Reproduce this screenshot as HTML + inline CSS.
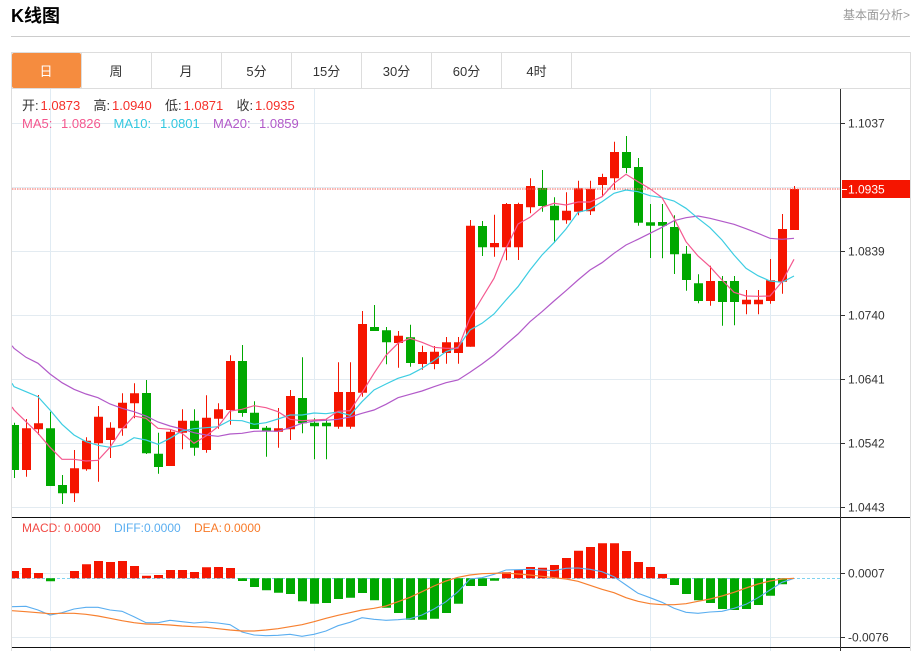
<!DOCTYPE html>
<html>
<head>
<meta charset="utf-8">
<style>
html,body{margin:0;padding:0;background:#fff;width:920px;height:651px;overflow:hidden}
svg{position:absolute;left:0;top:0;display:block}
text{font-family:"Liberation Sans","Noto Sans CJK SC",sans-serif}
</style>
</head>
<body>
<svg width="920" height="651" viewBox="0 0 920 651" xmlns="http://www.w3.org/2000/svg">
<defs><clipPath id="c"><rect x="12" y="88" width="828" height="563"/></clipPath></defs>
<text x="11" y="22" font-size="18" font-weight="700" fill="#000">K线图</text>
<text x="910" y="19" font-size="12" fill="#999" text-anchor="end">基本面分析&gt;</text>
<rect x="11" y="36" width="899" height="1" fill="#ccc"/>

<!-- frame + tabs -->
<rect x="11.5" y="52.5" width="899" height="36" fill="none" stroke="#ddd"/>
<path d="M11.5 88V651M910.5 88V651" stroke="#ddd" fill="none"/>
<path d="M81.5 52V88M151.5 52V88M221.5 52V88M291.5 52V88M361.5 52V88M431.5 52V88M501.5 52V88M571.5 52V88" stroke="#ddd" fill="none"/>
<rect x="12" y="53" width="69" height="35" rx="2" fill="#f58c3f"/>
<g font-size="13" text-anchor="middle" fill="#333">
<text x="46" y="76" fill="#fff">日</text>
<text x="116" y="76">周</text>
<text x="186" y="76">月</text>
<text x="256.5" y="76">5分</text>
<text x="326.5" y="76">15分</text>
<text x="396.5" y="76">30分</text>
<text x="466.5" y="76">60分</text>
<text x="536.5" y="76">4时</text>
</g>

<!-- grid -->
<path d="M12 123.5H840M12 187.5H840M12 251.5H840M12 315.5H840M12 379.5H840M12 443.5H840M12 507.5H840M12 573.5H840M12 637.5H840" stroke="#e3ebf1" fill="none"/>
<path d="M50.5 89V651M314.5 89V651M650.5 89V651M770.5 89V651" stroke="#e0ebf3" fill="none"/>

<!-- legend -->
<g font-size="13">
<text x="22" y="110" fill="#333">开:</text><text x="40.5" y="110" fill="#f5302a">1.0873</text>
<text x="93.5" y="110" fill="#333">高:</text><text x="112" y="110" fill="#f5302a">1.0940</text>
<text x="165" y="110" fill="#333">低:</text><text x="183.5" y="110" fill="#f5302a">1.0871</text>
<text x="236.5" y="110" fill="#333">收:</text><text x="255" y="110" fill="#f5302a">1.0935</text>
<text x="22" y="128" fill="#f4588f">MA5:</text><text x="61" y="128" fill="#f4588f">1.0826</text>
<text x="113.5" y="128" fill="#33c8e0">MA10:</text><text x="160" y="128" fill="#33c8e0">1.0801</text>
<text x="213" y="128" fill="#b25ac9">MA20:</text><text x="259" y="128" fill="#b25ac9">1.0859</text>
</g>

<g clip-path="url(#c)">
<!-- candle wicks -->
<path fill="none" stroke="#f51500" d="M26.5 419V476.7M38.5 395V435M74.5 450V502M86.5 437.3V470.7M98.5 406V481.7M110.5 422.3V458M122.5 393.3V435.7M134.5 383.3V418.3M170.5 429.3V466M182.5 409.3V449.3M206.5 395.3V452.7M218.5 403.3V428.7M230.5 355.3V424.7M278.5 408V447.7M290.5 390V440M338.5 362.3V428.7M350.5 362.3V428.7M362.5 311V396.7M398.5 331V367.7M422.5 345.7V369.7M434.5 346V369.3M446.5 337V363.7M458.5 337V363.7M470.5 220V346.7M494.5 214.7V256.7M506.5 203V260.3M518.5 202.7V260M530.5 178.3V213.3M566.5 192.3V223.7M578.5 180.7V215.3M590.5 180.7V215M602.5 173.7V196.7M614.5 141.7V190M710.5 265.7V305.7M746.5 290V314.3M758.5 290V314.3M770.5 259V303.7M782.5 214V293.7M794.5 186V230"/>
<path fill="none" stroke="#00a800" d="M14.5 422.7V478M50.5 411.7V486M62.5 475V504M146.5 380V454M158.5 432.7V473.7M194.5 409.3V455.7M242.5 345V416.7M254.5 401.3V429M266.5 426V456.7M302.5 357.3V433.3M314.5 418.3V459.3M326.5 419V459.3M374.5 305V331M386.5 327V364.3M410.5 324.7V366.7M482.5 221V256M542.5 170V211.7M554.5 197.3V242.7M626.5 136V173.3M638.5 158V225.7M650.5 204V258M662.5 204V258.3M674.5 215.3V274M686.5 246V290.7M698.5 274.3V303.3M722.5 276V325.7M734.5 276V325.3"/>
<!-- candle bodies -->
<path fill="#f51500" d="M22 428.3h9V470h-9zM34 423.3h9V429.3h-9zM70 468.3h9V493.3h-9zM82 440.7h9V469.3h-9zM94 416.7h9V443.3h-9zM106 427.7h9V440h-9zM118 402.7h9V428.3h-9zM130 393.3h9V403.3h-9zM166 431.7h9V466h-9zM178 420.7h9V432.7h-9zM202 417.7h9V450h-9zM214 409.3h9V418.7h-9zM226 361h9V410h-9zM274 428.3h9V431.7h-9zM286 396h9V429.3h-9zM334 392h9V426.7h-9zM346 392h9V426.7h-9zM358 324h9V392.7h-9zM394 335.7h9V343h-9zM418 352h9V364h-9zM430 351.7h9V364h-9zM442 342.3h9V353h-9zM454 342.3h9V353h-9zM466 225.7h9V346.7h-9zM490 243h9V247.3h-9zM502 204h9V247.3h-9zM514 204h9V247.3h-9zM526 186h9V207.3h-9zM562 210.7h9V220.3h-9zM574 188.3h9V211.7h-9zM586 188.7h9V211.3h-9zM598 177h9V185h-9zM610 152h9V178.3h-9zM706 281h9V301h-9zM742 299.7h9V304.3h-9zM754 299.7h9V304.3h-9zM766 280.3h9V301h-9zM778 229h9V281.7h-9zM790 189h9V230h-9z"/>
<path fill="#00a800" d="M10 425h9V470h-9zM46 428.3h9V486h-9zM58 485h9V493.3h-9zM142 393h9V453.3h-9zM154 453.7h9V467h-9zM190 420.7h9V447.7h-9zM238 361h9V413h-9zM250 412.7h9V429h-9zM262 427.7h9V431.3h-9zM298 398h9V423.3h-9zM310 422.7h9V426.3h-9zM322 422.7h9V426.3h-9zM370 327h9V331h-9zM382 330.3h9V342.3h-9zM406 337.3h9V363h-9zM478 226h9V247.3h-9zM538 188h9V206h-9zM550 205.7h9V220.3h-9zM622 152h9V168h-9zM634 167h9V222.7h-9zM646 222.3h9V225.7h-9zM658 222h9V225.7h-9zM670 227h9V254.3h-9zM682 253.7h9V280h-9zM694 283.3h9V301h-9zM718 281h9V302h-9zM730 281h9V302h-9z"/>

<!-- MA lines -->
<polyline fill="none" stroke="#b25ac9" stroke-width="1.2" points="12,345.7 14,348.3 26,357.3 38,363.3 50,374 62,382.7 74,389.3 86,394 98,397.7 110,404 122,408.3 134,411.7 146,416 158,422 170,426 182,429 194,432.7 206,435 218,436.3 230,434 242,433.3 254,431.3 266,431 278,431.3 290,427.7 302,423.3 314,421 326,420.3 338,419.3 350,417 362,413.3 374,410 386,404.3 398,397.7 410,394.3 422,391 434,386.7 446,382.7 458,380 470,372.3 482,364 494,355 506,344.3 518,334 530,321.7 542,311.7 554,301 566,290.7 578,280 590,270 602,262.7 614,253.3 626,245 638,239.3 650,233.3 662,227.3 674,220.7 686,217.7 698,216 710,218.3 722,221.3 734,224.3 746,228.7 758,233.3 770,238.3 782,239.3 794,238.3"/>
<polyline fill="none" stroke="#3dcde2" stroke-width="1.2" points="12,383.3 14,386.7 26,391.7 38,396.7 50,410 62,424.3 74,435 86,441.7 98,445.3 110,447.3 122,445 134,437.7 146,440 158,444.3 170,438.3 182,431 194,428.7 206,427.7 218,426.7 230,420.3 242,420.7 254,424.3 266,422.7 278,419 290,415 302,415 314,413 326,413.7 338,412 350,415.3 362,401.7 374,390 386,384 398,378.3 410,374.7 422,368.3 434,360.5 446,351.7 458,347.3 470,330 482,323.3 494,314 506,300 518,286.7 530,270 542,255 554,242.7 566,229 578,212.3 590,209.3 602,201.7 614,193.3 626,190 638,191.7 650,195.7 662,197.7 674,201 686,208.3 698,218.3 710,227.7 722,240 734,255 746,268.3 758,275.7 770,281 782,282.3 794,276"/>
<polyline fill="none" stroke="#f4588f" stroke-width="1.2" points="12,407 14,410 26,421.7 38,433.3 50,447.3 62,459.3 74,459.3 86,461 98,460.3 110,447.3 122,429.3 134,416 146,418.3 158,428.3 170,429.3 182,433.3 194,443.3 206,436 218,426.7 230,411 242,409.3 254,405.7 266,407.7 278,411.7 290,419.3 302,420.7 314,420 326,419.3 338,411.3 350,410.7 362,392.7 374,373.3 386,355.3 398,343.3 410,338.3 422,342.3 434,347.3 446,348.3 458,348.3 470,318 482,298 494,278.3 506,248.3 518,224 530,217.3 542,207.3 554,203.3 566,205 578,202 590,202 602,196.7 614,183.3 626,174.3 638,181.7 650,188.7 662,197.7 674,218.3 686,241.7 698,256 710,266.7 722,280 734,292.3 746,296 758,296.3 770,296 782,281.7 794,259.3"/>

<!-- MACD zero line -->
<path d="M12 578.5H840" stroke="#7fd3f0" stroke-dasharray="3 2" fill="none"/>
<!-- MACD bars -->
<path fill="#f51500" d="M10 571h9V578.3h-9zM22 568h9V578.3h-9zM34 573h9V578.3h-9zM70 571h9V578.3h-9zM82 564.3h9V578.3h-9zM94 561h9V578.3h-9zM106 562h9V578.3h-9zM118 561h9V578.3h-9zM130 566h9V578.3h-9zM142 575.7h9V578.3h-9zM154 575h9V578.3h-9zM166 570h9V578.3h-9zM178 570h9V578.3h-9zM190 572h9V578.3h-9zM202 567.3h9V578.3h-9zM214 567h9V578.3h-9zM226 568h9V578.3h-9zM502 572.3h9V578.3h-9zM514 570h9V578.3h-9zM526 567h9V578.3h-9zM538 567.7h9V578.3h-9zM550 565h9V578.3h-9zM562 558h9V578.3h-9zM574 550.7h9V578.3h-9zM586 547h9V578.3h-9zM598 543.3h9V578.3h-9zM610 543.3h9V578.3h-9zM622 551h9V578.3h-9zM634 562h9V578.3h-9zM646 567h9V578.3h-9zM658 574h9V578.3h-9z"/>
<path fill="#00a800" d="M46 578.3h9V581.3h-9zM238 578.3h9V581h-9zM250 578.3h9V587h-9zM262 578.3h9V590.3h-9zM274 578.3h9V592.7h-9zM286 578.3h9V594h-9zM298 578.3h9V601.3h-9zM310 578.3h9V603.7h-9zM322 578.3h9V603h-9zM334 578.3h9V599h-9zM346 578.3h9V597.7h-9zM358 578.3h9V593h-9zM370 578.3h9V600.3h-9zM382 578.3h9V607.7h-9zM394 578.3h9V613h-9zM406 578.3h9V619.7h-9zM418 578.3h9V619.7h-9zM430 578.3h9V618.7h-9zM442 578.3h9V613h-9zM454 578.3h9V603.7h-9zM466 578.3h9V586h-9zM478 578.3h9V586h-9zM490 578.3h9V580.7h-9zM670 578.3h9V585h-9zM682 578.3h9V594h-9zM694 578.3h9V600.3h-9zM706 578.3h9V603h-9zM718 578.3h9V609h-9zM730 578.3h9V610h-9zM742 578.3h9V609h-9zM754 578.3h9V605h-9zM766 578.3h9V595.7h-9zM778 578.3h9V584.3h-9z"/>
<!-- DIFF / DEA -->
<polyline fill="none" stroke="#5aaef0" stroke-width="1.1" points="12,606.7 26,606.3 38,610 50,615 62,612.7 74,609 86,607.3 98,607.3 110,610 122,611.3 134,616.7 146,622.7 158,622.7 170,620.3 182,621.7 194,623 206,622 218,623 230,624.7 242,632 254,635 266,635.7 278,635.3 290,634.3 302,636.3 314,634.3 326,631 338,625.7 350,622.3 362,617.7 374,619.3 386,620.3 398,619.7 410,618.7 422,615 434,609 446,601.7 458,591.7 470,579 482,577.7 494,574.3 506,570 518,569.7 530,569.3 542,570 554,570.7 566,568.3 578,568 590,569.3 602,571.7 614,576.7 626,585 638,593.3 650,597.7 662,602.3 674,608.3 686,612.3 698,613.3 710,612 722,611.3 734,608.3 746,604.3 758,597.7 770,590 782,582.3 794,578.3"/>
<polyline fill="none" stroke="#f78030" stroke-width="1.2" points="12,610.7 26,611.7 38,612.7 50,613.7 62,613.3 74,613.3 86,614.3 98,616 110,618.3 122,620.7 134,622.7 146,624 158,624.3 170,625 182,626 194,626.7 206,627.3 218,628.7 230,630 242,631 254,631 266,630 278,628.7 290,626.7 302,624.7 314,621.7 326,618.3 338,615.3 350,612.7 362,610 374,608.3 386,606 398,601.7 410,597.3 422,591.7 434,586 446,581 458,577.3 470,575 482,573.7 494,573.3 506,573 518,574 530,575 542,576.3 554,577.7 566,579 578,581.3 590,585.3 602,589.3 614,592.7 626,597.7 638,601.3 650,603.7 662,604.7 674,604.7 686,603.7 698,601.3 710,599 722,596 734,592.3 746,588 758,584 770,581 782,579 794,578.3"/>
</g>

<!-- last price line -->
<path d="M12 189H840" stroke="#f0605a" stroke-dasharray="1.5 1" fill="none"/>

<!-- separators + axis -->
<rect x="12" y="517" width="898" height="1" fill="#111"/>
<rect x="12" y="647" width="898" height="1" fill="#111"/>
<rect x="840" y="89" width="1" height="562" fill="#333"/>
<path d="M840 123.5h5M840 251.5h5M840 315.5h5M840 379.5h5M840 443.5h5M840 507.5h5M840 573.5h5M840 637.5h5" stroke="#333" fill="none"/>
<rect x="842" y="180" width="68" height="18" fill="#f51500"/>
<path d="M842 189.5h5" stroke="#fff" fill="none"/>
<g font-size="12" fill="#333">
<text x="848" y="127.5">1.1037</text>
<text x="848" y="193.5" fill="#fff">1.0935</text>
<text x="848" y="255.5">1.0839</text>
<text x="848" y="319.5">1.0740</text>
<text x="848" y="383.5">1.0641</text>
<text x="848" y="447.5">1.0542</text>
<text x="848" y="511.5">1.0443</text>
<text x="848" y="577.5">0.0007</text>
<text x="848" y="641.5">-0.0076</text>
</g>

<!-- MACD legend -->
<g font-size="12">
<text x="22" y="532" fill="#f24a45">MACD:</text><text x="64" y="532" fill="#f24a45">0.0000</text>
<text x="114" y="532" fill="#5aaef0">DIFF:</text><text x="144" y="532" fill="#5aaef0">0.0000</text>
<text x="194" y="532" fill="#f87a29">DEA:</text><text x="224" y="532" fill="#f87a29">0.0000</text>
</g>
</svg>
</body>
</html>
